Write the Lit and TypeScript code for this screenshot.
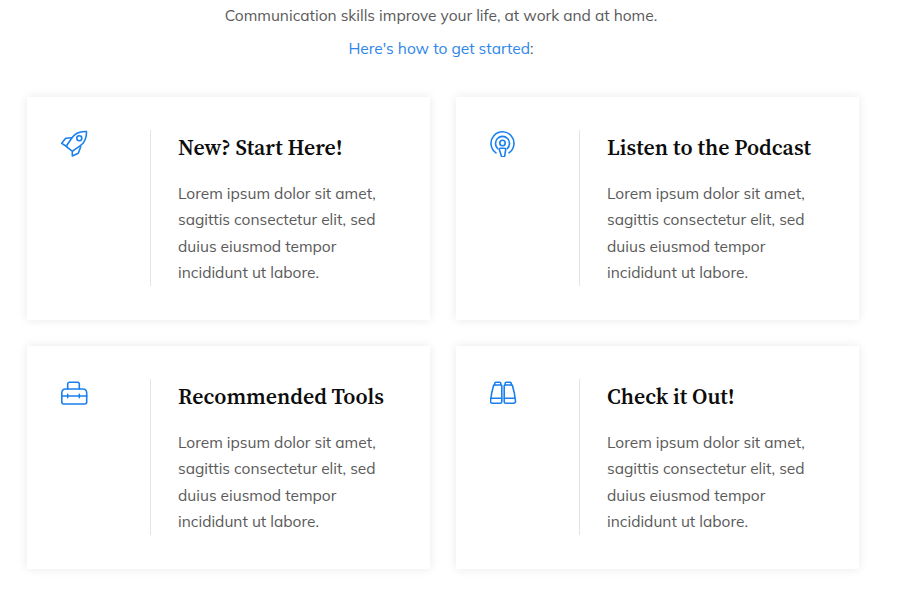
import { LitElement, html, css, svg } from "lit";
import { customElement } from "lit/decorators.js";

const barrel = svg`
  <path d="M4.800 6V4.300c0-.6.400-1 1-1h4c.6 0 1 .4 1 1V6"/>
  <path d="M3.700 6h7.300c.5 0 .8.300.8.800v15.900c0 .9-.7 1.500-1.500 1.500H2.300c-1.200 0-2-.9-1.800-2.100l1.200-8.100z"/>
  <path d="M.9 19.300h10.900"/>`;

const icons = {
  rocket: svg`
    <path d="M25.500 1.500C21.500 1.300 18.500 2 16 3.300 14 4.400 12.500 5.800 11 7.700L5.700 15.500c-.3.600-.2 1.200.3 1.700l4.500 3.500c.6.400 1.200.4 1.700 0l6.500-4.500c2.500-1.800 4.200-3.700 5.200-6 1.100-2.500 1.800-5.500 1.600-8.700z"/>
    <circle cx="18.300" cy="8.300" r="2.500"/>
    <path d="M11 7.700 4.700 8.300.7 13.300l5 3.200"/>
    <path d="M19.700 16.700l-2.400 6.600-6 2.700v-5"/>`,
  podcast: svg`
    <path d="M6 22.800A11.500 11.500 0 1 1 19 22.800"/>
    <path d="M7.800 18.600a7 7 0 1 1 9.400 0"/>
    <circle cx="12.500" cy="13" r="2.700"/>
    <path d="M9.300 19.500c0-.7.500-1.200 1.200-1.200h4c.7 0 1.200.5 1.200 1.200l-1 6.300c-.1.700-.5 1-1.200 1h-1c-.7 0-1.100-.3-1.200-1z"/>`,
  tools: svg`
    <path d="M.8 14c0-2.400 1.800-4 4-4h16.800c2.300 0 4.100 1.600 4.100 4v9c0 1.100-.9 2-2 2H2.800c-1.100 0-2-.9-2-2z"/>
    <path d="M6.700 10V5c0-1 .7-1.700 1.700-1.700h8.200c1 0 1.700.7 1.700 1.700v5"/>
    <path d="M.8 17h25"/>
    <path d="M6.700 15.400v3.200M18.300 15.400v3.200"/>`,
  binoculars: svg`
    ${barrel}
    <g transform="translate(26) scale(-1 1)">${barrel}</g>`,
};

const cards = [
  { icon: icons.rocket, title: "New? Start Here!" },
  { icon: icons.podcast, title: "Listen to the Podcast" },
  { icon: icons.tools, title: "Recommended Tools" },
  { icon: icons.binoculars, title: "Check it Out!" },
];

@customElement("app-root")
export class AppRoot extends LitElement {
  static override styles = css`
    :host {
      display: block;
      height: 592px;
      overflow: hidden;
      background: #fff;
      font-family: "Mulish", "Muli", "Nunito", "Lato", sans-serif;
      font-size: 15.5px;
      color: #5a5a5a;
    }

    .intro {
      text-align: center;
      padding-top: 4px;
      padding-right: 18px;
      line-height: 22px;
    }

    .intro p {
      margin: 0 0 11px;
    }

    .intro .lead {
      color: #2f86eb;
    }

    .grid {
      display: grid;
      grid-template-columns: 403px 403px;
      column-gap: 26px;
      row-gap: 26px;
      margin: 38px 0 0 27px;
    }

    .card {
      display: flex;
      height: 223px;
      box-sizing: border-box;
      padding: 33px 0 0 34px;
      background: #fff;
      box-shadow: 0 0 10px rgba(0, 0, 0, 0.09);
    }

    .icon {
      width: 89px;
      flex: none;
    }

    .icon svg {
      display: block;
      width: 27px;
      height: 27px;
      fill: none;
      stroke: #1a80ee;
      stroke-width: 1.6;
      stroke-linejoin: round;
      stroke-linecap: round;
    }

    .body {
      width: 224px;
      height: 156px;
      padding-left: 27px;
      border-left: 1px solid #e4e4e4;
    }

    h3 {
      margin: 0;
      padding-top: 3px;
      font-family: "Source Serif 4", "Liberation Serif", serif;
      font-size: 21.8px;
      font-weight: 600;
      line-height: 28px;
      color: #0c0c0c;
      white-space: nowrap;
    }

    .body p {
      margin: 19px 0 0;
      line-height: 26.4px;
    }
  `;

  override render() {
    return html`
      <div class="intro">
        <p>Communication skills improve your life, at work and at home.</p>
        <p><span class="lead">Here's how to get started</span>:</p>
      </div>
      <div class="grid">
        ${cards.map(
          (c) => html`
            <div class="card">
              <div class="icon"><svg viewBox="0 0 27 27">${c.icon}</svg></div>
              <div class="body">
                <h3>${c.title}</h3>
                <p>
                  Lorem ipsum dolor sit amet,<br />sagittis consectetur elit, sed<br />duius
                  eiusmod tempor<br />incididunt ut labore.
                </p>
              </div>
            </div>
          `
        )}
      </div>
    `;
  }
}

declare global {
  interface HTMLElementTagNameMap {
    "app-root": AppRoot;
  }
}
